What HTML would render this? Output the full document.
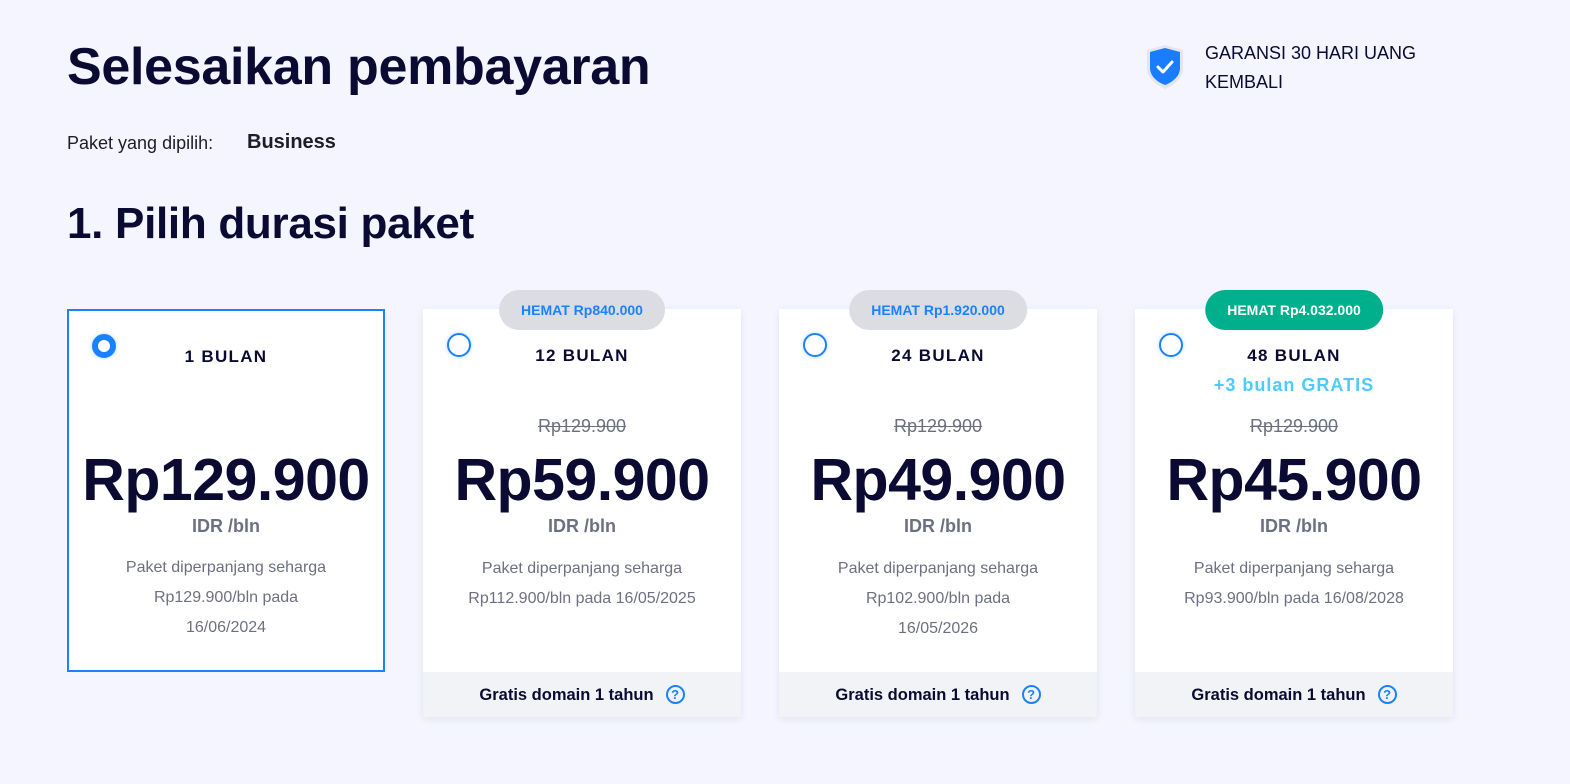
<!DOCTYPE html>
<html><head><meta charset="utf-8"><style>
*{margin:0;padding:0;box-sizing:border-box}
body{width:1570px;height:784px;background:#f4f5ff;font-family:"Liberation Sans",sans-serif;color:#0b0a33;position:relative;overflow:hidden}
.a{position:absolute;white-space:nowrap}
h1{position:absolute;left:67px;top:37px;font-size:52px;font-weight:700;letter-spacing:-0.3px;line-height:60px}
h2{position:absolute;left:67px;top:199px;font-size:44px;font-weight:700;line-height:50px;letter-spacing:-0.3px}
.card{position:absolute;top:309px;width:318px;height:408px;background:#fff;box-shadow:0 2px 8px rgba(30,30,80,.08)}
.card.sel{height:363px;border:2px solid #1a82ff;box-shadow:none}
.c{position:absolute;left:0;width:100%;text-align:center;white-space:nowrap}
.radio{position:absolute;left:24px;top:24px;width:24px;height:24px;border-radius:50%;border:2px solid #1a82ff;box-shadow:0 0 4px rgba(26,130,255,.3)}
.sel .radio{border:6px solid #1a82ff;left:23px;top:23px}
.t{top:37px;font-size:17px;font-weight:700;letter-spacing:1.3px}
.old{top:107px;font-size:18px;color:#6d7081;text-decoration:line-through}
.price{top:137px;font-size:59px;font-weight:700;letter-spacing:-0.5px}
.idr{top:207px;font-size:18px;font-weight:700;color:#6d7081}
.d{top:245px;font-size:16px;color:#6d7081;line-height:30px}
.foot{position:absolute;left:0;bottom:0;width:100%;height:45px;background:#f2f3f7;text-align:center;font-size:16.5px;font-weight:700;line-height:47px}
.q{display:inline-block;width:19px;height:19px;border:2px solid #1a82ff;border-radius:50%;color:#1a82ff;font-size:13px;line-height:15px;vertical-align:middle;margin-left:12px;margin-top:-3px}
.badge{position:absolute;top:-19px;height:40px;border-radius:20px;background:#dcdde2;color:#1a82ff;font-size:14px;font-weight:700;line-height:40px;padding:0 22px;left:50%;transform:translateX(-50%);white-space:nowrap}
</style></head><body>
<h1>Selesaikan pembayaran</h1>
<div class="a" style="left:67px;top:133px;font-size:18px;color:#1d1d2b">Paket yang dipilih:</div>
<div class="a" style="left:247px;top:131px;font-size:20px;font-weight:700;color:#1d1d2b">Business</div>
<h2>1. Pilih durasi paket</h2>
<svg class="a" style="left:1146px;top:44px" width="38" height="46" viewBox="0 0 38 46"><path d="M19 1 L37 6 V24 C37 34 28 41 19 45 C10 41 1 34 1 24 V6 Z" fill="#e3e6ee"/><path d="M19 4 L34 8 V24 C34 32 27 38 19 41 C11 38 4 32 4 24 V8 Z" fill="#1a7cff"/><path d="M12 23 L17 28 L26 18" stroke="#fff" stroke-width="3" fill="none" stroke-linecap="round" stroke-linejoin="round"/></svg>
<div class="a" style="left:1205px;top:39px;font-size:18px;line-height:29px;color:#0b0a33">GARANSI 30 HARI UANG<br>KEMBALI</div>

<div class="card sel" style="left:67px">
<div class="radio"></div>
<div class="c t" style="top:36px">1 BULAN</div>
<div class="c price" style="top:135px">Rp129.900</div>
<div class="c idr" style="top:205px">IDR /bln</div>
<div class="c d" style="top:242px">Paket diperpanjang seharga<br>Rp129.900/bln pada<br>16/06/2024</div>
</div>

<div class="card" style="left:423px">
<div class="badge">HEMAT Rp840.000</div>
<div class="radio"></div>
<div class="c t">12 BULAN</div>
<div class="c old">Rp129.900</div>
<div class="c price">Rp59.900</div>
<div class="c idr">IDR /bln</div>
<div class="c d">Paket diperpanjang seharga<br>Rp112.900/bln pada 16/05/2025</div>
<div class="foot">Gratis domain 1 tahun<span class="q">?</span></div>
</div>

<div class="card" style="left:779px">
<div class="badge">HEMAT Rp1.920.000</div>
<div class="radio"></div>
<div class="c t">24 BULAN</div>
<div class="c old">Rp129.900</div>
<div class="c price">Rp49.900</div>
<div class="c idr">IDR /bln</div>
<div class="c d">Paket diperpanjang seharga<br>Rp102.900/bln pada<br>16/05/2026</div>
<div class="foot">Gratis domain 1 tahun<span class="q">?</span></div>
</div>

<div class="card" style="left:1135px">
<div class="badge" style="background:#00b08c;color:#fff">HEMAT Rp4.032.000</div>
<div class="radio"></div>
<div class="c t">48 BULAN</div>
<div class="c" style="top:66px;font-size:18px;font-weight:700;color:#4ccbff;letter-spacing:1px">+3 bulan GRATIS</div>
<div class="c old">Rp129.900</div>
<div class="c price">Rp45.900</div>
<div class="c idr">IDR /bln</div>
<div class="c d">Paket diperpanjang seharga<br>Rp93.900/bln pada 16/08/2028</div>
<div class="foot">Gratis domain 1 tahun<span class="q">?</span></div>
</div>
</body></html>
